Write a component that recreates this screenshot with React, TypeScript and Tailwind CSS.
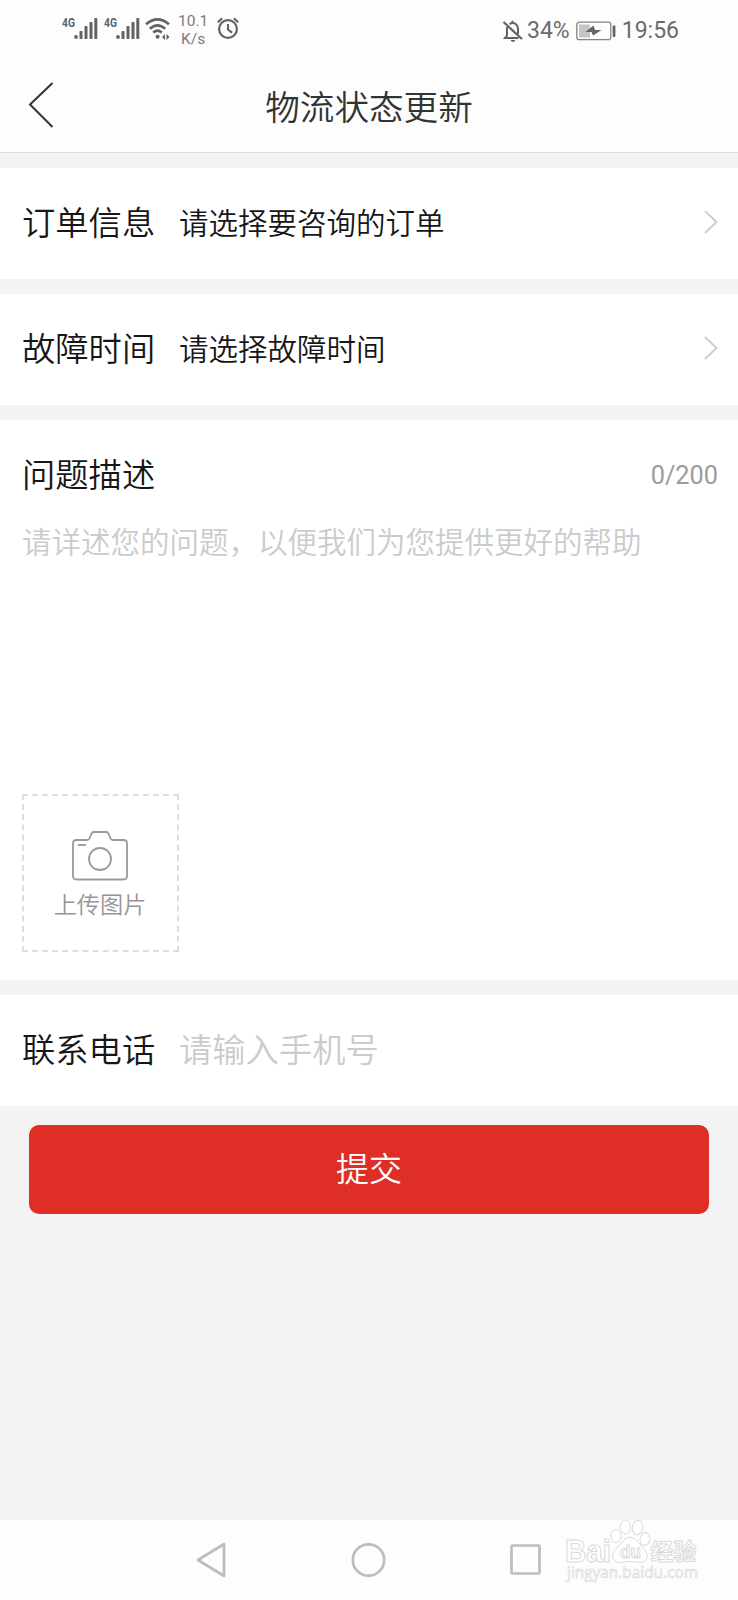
import type { ReactNode } from 'react';

function SignalIcon({ className = '' }: { className?: string }) {
  return (
    <svg className={className} width="36" height="24" viewBox="0 0 36 24" fill="#636363">
      <text x="0" y="11" fontFamily="Roboto, sans-serif" fontSize="12" fontWeight="700" textLength="13" lengthAdjust="spacingAndGlyphs">4G</text>
      <circle cx="14" cy="21" r="1.9" />
      <rect x="17.500" y="15" width="3" height="8" rx="0.8" />
      <rect x="22.500" y="10" width="3" height="13" rx="0.8" />
      <rect x="27.500" y="6" width="3" height="17" rx="0.8" />
      <rect x="32.300" y="2" width="3" height="21" rx="0.8" />
    </svg>
  );
}

function WifiIcon() {
  return (
    <svg className="ml-[5px]" width="26" height="24" viewBox="0 0 26 24" fill="none" stroke="#636363" strokeWidth="2.700">
      <path d="M1 8.300Q12.500-1.500 24 8.300" />
      <path d="M4.800 12.800Q12.500 6 20.200 12.800" />
      <path d="M8.200 16.500Q12.500 12.700 16.800 16.500" />
      <circle cx="12.600" cy="20.800" r="2" fill="#636363" stroke="none" />
      <path d="M20 18v6l-3-3zM21.500 18v6l3-3z" fill="#636363" stroke="none" />
    </svg>
  );
}

function AlarmIcon() {
  return (
    <svg className="ml-[8px]" width="24" height="24" viewBox="0 0 24 24" fill="none" stroke="#636363" strokeWidth="2.200">
      <circle cx="12" cy="13" r="8.900" />
      <path d="M12 8v5.500l4 3.200M1.800 6.200l4.400-3.900M22.200 6.200l-4.400-3.900" />
    </svg>
  );
}

function MutedBellIcon() {
  return (
    <svg width="22" height="24" viewBox="0 0 22 24" fill="none" stroke="#636363" strokeWidth="2">
      <path d="M5 8v8.500L3 19h13.500M7.500 5.200Q10.500 2.800 14 5.200Q16 7 16 10v5M10.500 3.800V1.800" />
      <path d="M1.500 3L20 20" strokeWidth="2.200" />
      <path d="M8.500 21h5q-.8 2-2.500 2t-2.500-2z" fill="#636363" stroke="none" />
    </svg>
  );
}

function BatteryIcon() {
  return (
    <svg className="ml-[5px]" width="42" height="20" viewBox="0 0 42 20">
      <rect x="1.800" y="1.200" width="34" height="17.500" rx="2.500" fill="none" stroke="#858585" strokeWidth="1.300" />
      <rect x="4" y="3.500" width="11" height="13" fill="#c5c5c5" />
      <path d="M18.500 4.500L10.500 11H16.500L18 14.500L26.500 9H20Z" fill="#636363" />
      <rect x="37.700" y="4.500" width="2.700" height="11.500" rx="1" fill="#636363" />
    </svg>
  );
}

function StatusBar() {
  return (
    <div className="flex h-[60px] items-start pr-[59px] pl-[62px] font-[Roboto,sans-serif] font-normal text-[#6b6b6b]">
      <div className="flex pt-4">
        <SignalIcon />
        <SignalIcon className="ml-[6px]" />
        <WifiIcon />
      </div>
      <div className="ml-[7px] pt-[12px] text-center text-[15.500px] leading-[18px] text-[#7b7b7b]">
        <div>10.1</div>
        <div>K/s</div>
      </div>
      <div className="pt-[16px]">
        <AlarmIcon />
      </div>
      <div className="ml-auto flex items-center pt-[17px] text-[23px] leading-[26px]">
        <MutedBellIcon />
        <span className="ml-[3px] pt-px">34%</span>
        <BatteryIcon />
        <span className="ml-[5px] pt-px">19:56</span>
      </div>
    </div>
  );
}

function Chevron() {
  return (
    <svg className="mt-[3px] ml-auto" width="16" height="26" viewBox="0 0 16 26" fill="none" stroke="#cfcfcf" strokeWidth="2">
      <path d="M3 2L14.500 13L3 24" />
    </svg>
  );
}

function Row({ label, children }: { label: string; children: ReactNode }) {
  return (
    <div className="mb-[15px] flex h-[111px] shrink-0 items-center bg-white pr-5 pb-[6px] pl-[22px]">
      <span className="w-[157px] shrink-0 text-[33.300px] leading-[48px]">{label}</span>
      {children}
    </div>
  );
}

function CameraIcon() {
  return (
    <svg width="58" height="52" viewBox="0 0 58 52" fill="none" stroke="#9a9a9a" strokeWidth="1.800">
      <path d="M5.500 10H16Q18 10 18.700 8L20.500 3.500Q21.200 2 23 2H35Q36.800 2 37.500 3.500L39.300 8Q40 10 42 10H52.500Q56 10 56 13.500V46Q56 49.500 52.500 49.500H5.500Q2 49.500 2 46V13.500Q2 10 5.500 10Z" />
      <circle cx="29" cy="29" r="11" />
      <path d="M7 15h8" />
    </svg>
  );
}

function Watermark() {
  return (
    <svg className="absolute top-[-4px] left-[560px]" width="144" height="80" viewBox="0 0 144 80" fill="#ffffff" stroke="#dadada" strokeWidth="1">
      <text x="5" y="45.500" fontFamily="Liberation Sans, sans-serif" fontWeight="700" fontSize="31" textLength="46" lengthAdjust="spacingAndGlyphs">Bai</text>
      <ellipse cx="56" cy="20" rx="5" ry="6.500" />
      <ellipse cx="65.500" cy="11" rx="5.200" ry="7" />
      <ellipse cx="77.500" cy="11.500" rx="5.200" ry="7" transform="rotate(8 77.500 11.500)" />
      <ellipse cx="85" cy="23" rx="5" ry="6.500" transform="rotate(12 85 23)" />
      <path d="M70 21Q75 21 79 27L85 34Q89 40 86 44Q83 47.500 76 46Q70 45 64 46Q56 48 53.500 43Q51 38 56 33L62 26Q66 21 70 21Z" />
      <text x="60" y="42" fontFamily="Liberation Sans, sans-serif" fontWeight="700" fontSize="18" textLength="21" lengthAdjust="spacingAndGlyphs">du</text>
      <text x="90.500" y="44" fontFamily="Noto Sans CJK SC, sans-serif" fontWeight="700" fontSize="23" textLength="46">经验</text>
      <text x="7" y="62" fontFamily="Open Sans, sans-serif" fontWeight="400" fontSize="16.500" strokeWidth="0.700" textLength="131" lengthAdjust="spacingAndGlyphs">jingyan.baidu.com</text>
    </svg>
  );
}

export default function App() {
  return (
    <div className="flex h-[1600px] w-[738px] flex-col overflow-hidden bg-[#f3f3f3] font-['Noto_Sans_CJK_SC',sans-serif] font-[350] text-[#161616]">
      <header className="mb-[15px] h-[153px] shrink-0 border-b border-[#dedede] bg-[#fdfdfd]">
        <StatusBar />
        <div className="grid h-[90px] grid-cols-[1fr_auto_1fr] items-center">
          <svg className="ml-[27px]" width="28" height="48" viewBox="0 0 28 48" fill="none" stroke="#333333" strokeWidth="2">
            <path d="M25.500 2L3 23.500L25.500 46" />
          </svg>
          <h1 className="text-[34.600px] leading-[50px] text-[#333333]">物流状态更新</h1>
        </div>
      </header>

      <Row label="订单信息">
        <span className="pt-px text-[29.500px] leading-[44px]">请选择要咨询的订单</span>
        <Chevron />
      </Row>
      <Row label="故障时间">
        <span className="pt-px text-[29.500px] leading-[44px]">请选择故障时间</span>
        <Chevron />
      </Row>

      <section className="mb-[15px] h-[560px] shrink-0 bg-white px-[22px] pt-[29px]">
        <div className="-mr-[2px] flex items-center justify-between">
          <h2 className="text-[33.300px] leading-[48px]">问题描述</h2>
          <span className="pt-[5px] font-[Roboto,sans-serif] text-[25.300px] font-normal text-[#9c9c9c]">0/200</span>
        </div>
        <p className="mt-[21px] h-[252px] text-[29.500px] leading-[44px] text-[#cbcbcb]">请详述您的问题，以便我们为您提供更好的帮助</p>
        <div className="mt-[24px] flex h-[158px] w-[157px] flex-col items-center border-2 border-dashed border-[#dddddd] pt-[34px] pr-px text-[#969696]">
          <CameraIcon />
          <span className="mt-[4px] text-[23.200px] leading-[34px]">上传图片</span>
        </div>
      </section>

      <Row label="联系电话">
        <span className="text-[33.300px] leading-[48px] text-[#cbcbcb]">请输入手机号</span>
      </Row>

      <button className="mx-[29px] mt-1 h-[89px] shrink-0 rounded-[10px] bg-[#df2e26] pb-[6px] text-[33px] leading-[48px] text-white">提交</button>

      <nav className="relative mt-auto h-[80px] shrink-0 bg-[#fdfdfd]">
        <div className="flex h-full items-center justify-between pr-[194px] pl-[194px]">
          <svg width="34" height="40" viewBox="0 0 34 40" fill="none" stroke="#bdbdbd" strokeWidth="2.700" strokeLinejoin="round">
            <path d="M30 4V36L4 20Z" />
          </svg>
          <svg width="40" height="40" viewBox="0 0 40 40" fill="none" stroke="#bdbdbd" strokeWidth="2.700">
            <circle cx="20.500" cy="20" r="15.700" />
          </svg>
          <svg width="36" height="40" viewBox="0 0 36 40" fill="none" stroke="#bdbdbd" strokeWidth="2.700">
            <rect x="3.500" y="5.500" width="28" height="28" rx="1" />
          </svg>
        </div>
        <Watermark />
      </nav>
    </div>
  );
}
